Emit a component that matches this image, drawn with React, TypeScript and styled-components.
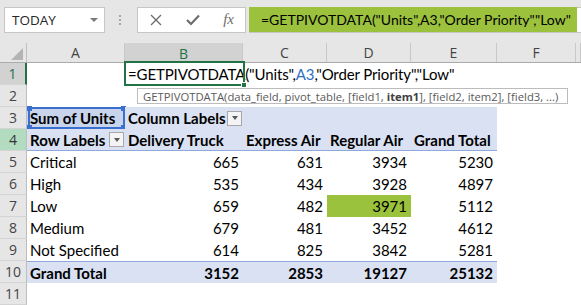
import React from "react";
import styled, { createGlobalStyle, css } from "styled-components";

const GlobalStyle = createGlobalStyle`
  html, body { margin: 0; padding: 0; background: #ffffff; }
  body { width: 581px; height: 305px; overflow: hidden; font-family: Lato, "Liberation Sans", sans-serif; }
  * { box-sizing: border-box; }
`;

const TEMPLATE = "27px 98px 118px 84px 84px 86px 79px 1fr";

const Frame = styled.div`
  width: 581px;
  height: 305px;
  display: flex;
  flex-direction: column;
  background: #ffffff;
  position: relative;
  overflow: hidden;
`;

const Toolbar = styled.div`
  height: 43px;
  flex: none;
  display: flex;
  align-items: flex-start;
  padding: 7px 0 0 4px;
  background: #e6e6e6;
`;

const NameBox = styled.div`
  width: 101px;
  height: 26px;
  background: #ffffff;
  border: 1px solid #c6c6c6;
  display: flex;
  align-items: center;
  justify-content: space-between;
  padding: 0 6px 0 7px;
  font-family: "Open Sans", "Noto Sans", sans-serif;
  font-size: 13.5px;
  color: #262626;
`;

const Caret = styled.span`
  width: 0;
  height: 0;
  border-left: 4px solid transparent;
  border-right: 4px solid transparent;
  border-top: 4px solid #7a7a7a;
`;

const Grip = styled.div`
  width: 3px;
  margin: 8px 15px 0 14px;
  display: flex;
  flex-direction: column;
  gap: 2px;
`;

const GripDot = styled.span`
  width: 2px;
  height: 2px;
  background: #a6a6a6;
`;

const FxBox = styled.div`
  width: 109px;
  height: 26px;
  background: #ffffff;
  border: 1px solid #c6c6c6;
  display: flex;
  align-items: center;
  justify-content: space-between;
  padding: 0 11px 0 12px;
`;

const FxLabel = styled.span`
  font-family: "Liberation Serif", "DejaVu Serif", serif;
  font-style: italic;
  font-size: 15px;
  color: #6d6d6d;
  margin-top: -2px;
`;

const FormulaInput = styled.div`
  flex: 1;
  height: 26px;
  margin-left: 3px;
  background: #ffffff;
  border-top: 1px solid #c6c6c6;
  border-left: 1px solid #c6c6c6;
  border-bottom: 1px solid #c6c6c6;
  display: flex;
`;

const FormulaSelection = styled.div`
  width: 328px;
  height: 25px;
  margin-top: -1px;
  margin-left: -1px;
  background: #9bc13d;
  display: flex;
  align-items: center;
  padding-left: 12px;
  font-size: 14px;
  color: #000000;
  white-space: nowrap;
  overflow: hidden;
`;

const Sheet = styled.div`
  flex: 1;
  display: flex;
  flex-direction: column;
`;

const HeaderRow = styled.div`
  display: grid;
  grid-template-columns: ${TEMPLATE};
  height: 20px;
  background: #e6e6e6;
  border-bottom: 1px solid #ababab;
`;

const Corner = styled.div`
  position: relative;
  border-right: 1px solid #c0c0c0;
  display: flex;
  align-items: flex-end;
  justify-content: flex-end;
  padding: 0 3px 2px 0;
`;

const ColHeader = styled.div<{ $active?: boolean }>`
  border-right: 1px solid #c8c8c8;
  display: flex;
  align-items: center;
  justify-content: center;
  font-family: "Open Sans", "Noto Sans", sans-serif;
  font-size: 14px;
  color: #444444;
  ${(p) =>
    p.$active &&
    css`
      background: #d2d2d2;
      color: #217346;
      box-shadow: inset 0 -2px 0 #217346;
      margin-bottom: -1px;
    `}
`;

const SheetRow = styled.div`
  display: grid;
  grid-template-columns: ${TEMPLATE};
  height: 22px;
`;

const RowHeader = styled.div<{ $tone?: "active" | "ref" }>`
  background: #e6e6e6;
  border-right: 1px solid #bdbdbd;
  border-bottom: 1px solid #d4d4d4;
  display: flex;
  align-items: center;
  justify-content: center;
  font-family: "Open Sans", "Noto Sans", sans-serif;
  font-size: 14px;
  color: #444444;
  ${(p) =>
    p.$tone === "active" &&
    css`
      background: #d2d2d2;
      color: #217346;
      border-right: 2px solid #217346;
    `}
  ${(p) =>
    p.$tone === "ref" &&
    css`
      background: #b3dbbf;
      color: #333333;
    `}
`;

type Fill = "none" | "blue" | "sel" | "green";

const fillColor: Record<Fill, string> = {
  none: "transparent",
  blue: "#d9e1f2",
  sel: "#c8d3ec",
  green: "#9bc23c",
};

const Cell = styled.div<{
  $fill?: Fill;
  $bold?: boolean;
  $right?: boolean;
  $lineTop?: boolean;
  $lineBottom?: boolean;
}>`
  position: relative;
  display: flex;
  align-items: center;
  justify-content: ${(p) => (p.$right ? "flex-end" : "space-between")};
  padding: 0 ${(p) => (p.$right ? "4px" : "1px")} 0 3px;
  background: ${(p) => fillColor[p.$fill ?? "none"]};
  font-size: 15px;
  font-weight: ${(p) => (p.$bold ? 700 : 400)};
  color: #000000;
  white-space: nowrap;
  border-top: ${(p) => (p.$lineTop ? "1px solid #8ea9db" : "none")};
  border-bottom: ${(p) => (p.$lineBottom ? "1px solid #8ea9db" : "none")};
`;

const CellText = styled.span`
  display: block;
`;

const FormulaText = styled.span`
  display: block;
  letter-spacing: -0.12px;
`;

const FilterButton = styled.span`
  width: 15px;
  height: 15px;
  flex: none;
  background: #f4f4f4;
  border: 1px solid #a8a8a8;
  display: flex;
  align-items: center;
  justify-content: center;
`;

const FilterCaret = styled.span`
  width: 0;
  height: 0;
  border-left: 3.5px solid transparent;
  border-right: 3.5px solid transparent;
  border-top: 4px solid #595959;
`;

const ActiveFrame = styled.span`
  position: absolute;
  left: -1px;
  top: -2px;
  right: -2px;
  bottom: -1px;
  border: 2px solid #217346;
  pointer-events: none;
`;

const FillHandle = styled.span`
  position: absolute;
  right: -4px;
  bottom: -4px;
  width: 6px;
  height: 6px;
  background: #217346;
  border: 1px solid #ffffff;
`;

const RefFrame = styled.span`
  position: absolute;
  left: 1px;
  top: 0;
  right: 0;
  bottom: 0;
  border: 2px solid #3a6fd0;
  pointer-events: none;
`;

const RefHandle = styled.span<{ $x: "l" | "r"; $y: "t" | "b" }>`
  position: absolute;
  width: 5px;
  height: 5px;
  background: #3a6fd0;
  ${(p) => (p.$x === "l" ? "left: -3px;" : "right: -3px;")}
  ${(p) => (p.$y === "t" ? "top: -3px;" : "bottom: -3px;")}
`;

const RefText = styled.span`
  color: #2f6fc4;
`;

const Tooltip = styled.div`
  position: absolute;
  left: 137px;
  top: 88px;
  width: 431px;
  height: 16px;
  background: #ffffff;
  border: 1px solid #bcbcbc;
  display: flex;
  align-items: center;
  padding-left: 5px;
  font-family: "Open Sans", "Noto Sans", sans-serif;
  font-size: 11.3px;
  color: #5a5a5a;
  white-space: nowrap;
`;

const Strong = styled.b`
  font-weight: 700;
  color: #404040;
`;

const Formula = () => (
  <>
    =GETPIVOTDATA("Units",<RefText>A3</RefText>,"Order Priority","Low"
  </>
);

const FormulaPlain = () => <>=GETPIVOTDATA("Units",A3,"Order Priority","Low"</>;

const Filter = () => (
  <FilterButton>
    <FilterCaret />
  </FilterButton>
);

const dataRows: { label: string; values: number[]; hi?: number }[] = [
  { label: "Critical", values: [665, 631, 3934, 5230] },
  { label: "High", values: [535, 434, 3928, 4897] },
  { label: "Low", values: [659, 482, 3971, 5112], hi: 2 },
  { label: "Medium", values: [679, 481, 3452, 4612] },
  { label: "Not Specified", values: [614, 825, 3842, 5281] },
];

const COL_LETTERS = ["A", "B", "C", "D", "E", "F"];

export default function App() {
  return (
    <Frame>
      <GlobalStyle />
      <Toolbar>
        <NameBox>
          <span>TODAY</span>
          <Caret />
        </NameBox>
        <Grip>
          <GripDot />
          <GripDot />
          <GripDot />
        </Grip>
        <FxBox>
          <svg width="12" height="12" viewBox="0 0 12 12">
            <path d="M1 1 L11 11 M11 1 L1 11" stroke="#6e6e6e" strokeWidth="1.4" fill="none" />
          </svg>
          <svg width="14" height="12" viewBox="0 0 14 12">
            <path d="M1 6 L5 10 L13 1.5" stroke="#6e6e6e" strokeWidth="2.2" fill="none" />
          </svg>
          <FxLabel>fx</FxLabel>
        </FxBox>
        <FormulaInput>
          <FormulaSelection>
            <FormulaPlain />
          </FormulaSelection>
        </FormulaInput>
      </Toolbar>

      <Sheet>
        <HeaderRow>
          <Corner>
            <svg width="12" height="12" viewBox="0 0 12 12">
              <path d="M12 0 L12 12 L0 12 Z" fill="#b4b4b4" />
            </svg>
          </Corner>
          {COL_LETTERS.map((c) => (
            <ColHeader key={c} $active={c === "B"}>
              {c}
            </ColHeader>
          ))}
          <ColHeader />
        </HeaderRow>

        <SheetRow>
          <RowHeader $tone="active">1</RowHeader>
          <Cell />
          <Cell>
            <FormulaText>
              <Formula />
            </FormulaText>
            <ActiveFrame>
              <FillHandle />
            </ActiveFrame>
          </Cell>
        </SheetRow>

        <SheetRow>
          <RowHeader>2</RowHeader>
        </SheetRow>

        <SheetRow>
          <RowHeader>3</RowHeader>
          <Cell $fill="sel" $bold>
            <CellText>Sum of Units</CellText>
            <RefFrame>
              <RefHandle $x="l" $y="t" />
              <RefHandle $x="r" $y="t" />
              <RefHandle $x="l" $y="b" />
              <RefHandle $x="r" $y="b" />
            </RefFrame>
          </Cell>
          <Cell $fill="blue" $bold>
            <CellText>Column Labels</CellText>
            <Filter />
          </Cell>
          <Cell $fill="blue" />
          <Cell $fill="blue" />
          <Cell $fill="blue" />
        </SheetRow>

        <SheetRow>
          <RowHeader $tone="ref">4</RowHeader>
          <Cell $fill="blue" $bold $lineBottom>
            <CellText>Row Labels</CellText>
            <Filter />
          </Cell>
          <Cell $fill="blue" $bold $lineBottom>
            <CellText>Delivery Truck</CellText>
          </Cell>
          <Cell $fill="blue" $bold $lineBottom>
            <CellText>Express Air</CellText>
          </Cell>
          <Cell $fill="blue" $bold $lineBottom>
            <CellText>Regular Air</CellText>
          </Cell>
          <Cell $fill="blue" $bold $lineBottom>
            <CellText>Grand Total</CellText>
          </Cell>
        </SheetRow>

        {dataRows.map((r, i) => (
          <SheetRow key={r.label}>
            <RowHeader>{i + 5}</RowHeader>
            <Cell>
              <CellText>{r.label}</CellText>
            </Cell>
            {r.values.map((v, j) => (
              <Cell key={j} $right $fill={r.hi === j ? "green" : "none"}>
                {v}
              </Cell>
            ))}
          </SheetRow>
        ))}

        <SheetRow>
          <RowHeader>10</RowHeader>
          <Cell $fill="blue" $bold $lineTop>
            <CellText>Grand Total</CellText>
          </Cell>
          {[3152, 2853, 19127, 25132].map((v) => (
            <Cell key={v} $fill="blue" $bold $right $lineTop>
              {v}
            </Cell>
          ))}
        </SheetRow>

        <SheetRow>
          <RowHeader>11</RowHeader>
        </SheetRow>
      </Sheet>

      <Tooltip>
        GETPIVOTDATA(data_field, pivot_table, [field1,&nbsp;<Strong>item1</Strong>], [field2, item2], [field3, ...)
      </Tooltip>
    </Frame>
  );
}
